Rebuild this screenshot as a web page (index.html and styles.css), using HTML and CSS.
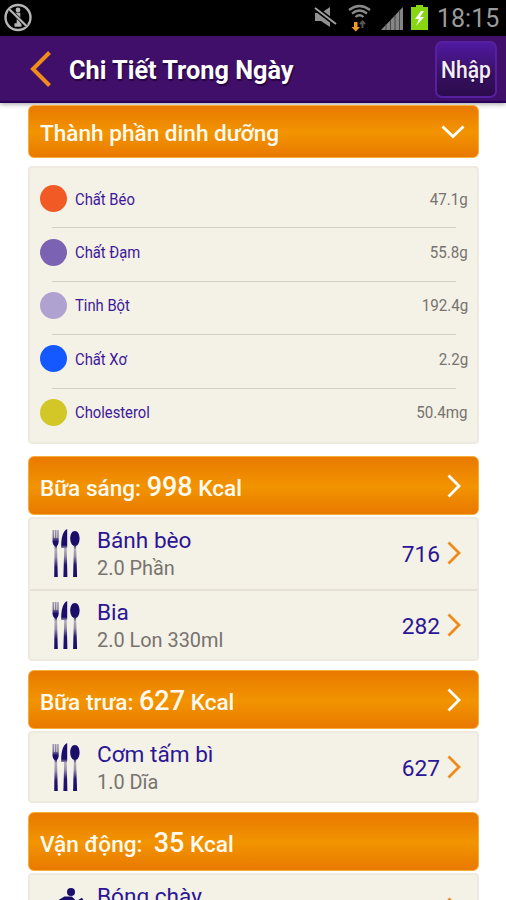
FILE: index.html
```html
<!DOCTYPE html>
<html lang="vi">
<head>
  <meta charset="UTF-8" />
  <meta name="viewport" content="width=device-width, initial-scale=1.0"/>
  <title>Chi Tiết Trong Ngày</title>
  <link rel="stylesheet" href="styles.css">
</head>
<body>

  <!-- Shared shapes -->
  <svg class="defs" width="0" height="0">
    <defs>
      <linearGradient id="steel" x1="0" y1="0" x2="0" y2="50" gradientUnits="userSpaceOnUse">
        <stop offset="0" stop-color="#1a0d6c"/>
        <stop offset="0.34" stop-color="#1a0d6c"/>
        <stop offset="0.42" stop-color="#b3adbf"/>
        <stop offset="0.56" stop-color="#958dab"/>
        <stop offset="0.74" stop-color="#21126d"/>
        <stop offset="1" stop-color="#1a0d6c"/>
      </linearGradient>
      <linearGradient id="fork" x1="0" y1="0" x2="0" y2="50" gradientUnits="userSpaceOnUse">
        <stop offset="0" stop-color="#aaa5b9"/>
        <stop offset="0.18" stop-color="#817898"/>
        <stop offset="0.27" stop-color="#1a0d6c"/>
        <stop offset="0.35" stop-color="#1a0d6c"/>
        <stop offset="0.42" stop-color="#b3adbf"/>
        <stop offset="0.58" stop-color="#958dab"/>
        <stop offset="0.78" stop-color="#21126d"/>
        <stop offset="1" stop-color="#1a0d6c"/>
      </linearGradient>
      <symbol id="cutlery" viewBox="0 0 28 50">
        <path fill="url(#fork)" d="M.5 2h1.500v8h.7V2h1.800v8h.7V2h1.500v11c0 2.500-.8 4-1.700 5l.8 31H2.200L2.600 18C1.300 17 .5 15.500.5 13z"/>
        <path fill="url(#steel)" d="M15.200 1v18l-.5 1 .7 29h-4l.8-29H9.200C9 12 10.200 3 15.200 1z"/>
        <path fill="url(#steel)" d="M22.900 3c3 0 4.700 3.500 4.700 7.500 0 3.700-1.300 6.500-3.500 7.500l1 31h-4l.8-31c-2.300-1-3.700-3.800-3.700-7.500 0-4 1.700-7.500 4.700-7.500z"/>
      </symbol>
      <symbol id="chevron" viewBox="0 0 14 24">
        <path d="M1.500 1.500L12 12 1.500 22.500" fill="none" stroke="currentColor" stroke-width="2.800"/>
      </symbol>
    </defs>
  </svg>

  <div class="screen">
    <div class="status-bar">
      <svg class="status-left" width="30" height="30" viewBox="0 0 30 30" fill="none" stroke="#b5b5b5">
        <circle cx="15" cy="14.500" r="12.500" stroke-width="2.400"/>
        <circle cx="15" cy="7" r="2.400" fill="#b5b5b5" stroke="none"/>
        <path d="M11.500 11.500h4v10M11.500 22h7" stroke-width="3.600"/>
        <path d="M6.500 6.500L23.500 23" stroke="#000" stroke-width="3.600"/>
        <path d="M6 6L24 23.500" stroke-width="2.300"/>
      </svg>
      <svg class="status-icons" width="118" height="36" viewBox="0 0 118 36">
        <!-- muted speaker -->
        <path d="M1 13h6l9-6v20l-9-6H1z" fill="#919191"/>
        <path d="M1 8l21 16" stroke="#000" stroke-width="5"/>
        <path d="M1 8l21 16" stroke="#a2a2a2" stroke-width="2"/>
        <!-- wifi -->
        <g fill="none" stroke="#898989" stroke-width="2.300">
          <path d="M35 10q10.500-8 21 0M38 13.500q7.500-6 15 0M41.500 17q4-3.500 8 0"/>
          <path d="M48.500 28v-6M46 24l2.500-2.500L51 24" stroke="#555" stroke-width="2"/>
        </g>
        <path d="M40 22h3.500v5H46l-4.200 4.500L37.500 27H40z" fill="#f39a24"/>
        <!-- signal -->
        <path d="M67 30h22V7z" fill="#858585"/>
        <path d="M72 24v6M76.500 20v10M81 15v15M85.500 10v20" stroke="#444" stroke-width="1"/>
        <!-- battery -->
        <path d="M97 7h5V5h7v2h5v23H97z" fill="#86d611"/>
        <path d="M107 11l-6 8h4l-3 7 8-9h-4l4-6z" fill="#fff"/>
      </svg>
      <span class="clock">18:15</span>
    </div>

    <div class="header">
      <svg class="back" width="22" height="36" viewBox="0 0 22 36">
        <path d="M19.500 1.500L3 18l16.500 16.500" fill="none" stroke="#f08c1a" stroke-width="4"/>
      </svg>
      <h1>Chi Tiết Trong Ngày</h1>
      <button type="button"><span>Nhập</span></button>
    </div>

    <div class="content">
      <div class="bar bar-nutrition">
        <span class="bar-title">Thành phần dinh dưỡng</span>
        <svg class="down" width="24" height="14" viewBox="0 0 24 14">
          <path d="M1.500 1.500L12 11.500 22.500 1.500" fill="none" stroke="#fff" stroke-width="2.800"/>
        </svg>
      </div>

      <div class="nutrition">
        <div class="nutrient"><i class="dot fat"></i><span class="name">Chất Béo</span><span class="amount">47.1g</span></div>
        <div class="nutrient"><i class="dot protein"></i><span class="name">Chất Đạm</span><span class="amount">55.8g</span></div>
        <div class="nutrient"><i class="dot starch"></i><span class="name">Tinh Bột</span><span class="amount">192.4g</span></div>
        <div class="nutrient"><i class="dot fiber"></i><span class="name">Chất Xơ</span><span class="amount">2.2g</span></div>
        <div class="nutrient"><i class="dot cholesterol"></i><span class="name">Cholesterol</span><span class="amount">50.4mg</span></div>
      </div>

      <div class="bar">
        <span class="bar-title">Bữa sáng: <b>998</b> Kcal</span>
        <svg class="arrow"><use href="#chevron"/></svg>
      </div>
      <div class="list">
        <div class="item">
          <svg class="food"><use href="#cutlery"/></svg>
          <div class="info"><p class="dish">Bánh bèo</p><p class="portion">2.0 Phần</p></div>
          <span class="kcal">716</span>
          <svg class="arrow"><use href="#chevron"/></svg>
        </div>
        <div class="item">
          <svg class="food"><use href="#cutlery"/></svg>
          <div class="info"><p class="dish">Bia</p><p class="portion">2.0 Lon 330ml</p></div>
          <span class="kcal">282</span>
          <svg class="arrow"><use href="#chevron"/></svg>
        </div>
      </div>

      <div class="bar">
        <span class="bar-title">Bữa trưa: <b>627</b> Kcal</span>
        <svg class="arrow"><use href="#chevron"/></svg>
      </div>
      <div class="list">
        <div class="item">
          <svg class="food"><use href="#cutlery"/></svg>
          <div class="info"><p class="dish">Cơm tấm bì</p><p class="portion">1.0 Dĩa</p></div>
          <span class="kcal">627</span>
          <svg class="arrow"><use href="#chevron"/></svg>
        </div>
      </div>

      <div class="bar">
        <span class="bar-title">Vận động:&nbsp; <b>35</b> Kcal</span>
      </div>
      <div class="list">
        <div class="item">
          <svg class="sport" viewBox="0 0 36 50">
            <circle cx="19" cy="6" r="4" fill="#1a0d6c"/>
            <path d="M8 15.500l5-3h6l5 5 7-4M17 13l-4 14 9 6-2 12M13 27l-8 11" fill="none" stroke="#1a0d6c" stroke-width="4"/>
          </svg>
          <div class="info"><p class="dish">Bóng chày</p></div>
          <svg class="arrow"><use href="#chevron"/></svg>
        </div>
      </div>
    </div>
  </div>

</body>
</html>
```
FILE: styles.css
```css
body {
  font-family: Roboto, "Noto Sans", sans-serif;
  background: #fff;
  margin: 0;
}

.defs {
  position: absolute;
}

.screen {
  height: 900px;
  overflow: hidden;
}

.status-bar {
  display: flex;
  align-items: center;
  box-sizing: border-box;
  height: 36px;
  padding: 0 7px 0 3px;
  background: #000;
}

.status-icons {
  margin-left: auto;
  margin-right: 5px;
}

.clock {
  width: 62px;
  color: #9b9b9b;
  font-size: 25px;
  white-space: nowrap;
}

.header {
  display: flex;
  align-items: center;
  box-sizing: border-box;
  height: 67px;
  padding: 0 9px 0 30px;
  background: #400f69;
  border-bottom: 2px solid #28005a;
  box-shadow: 0 1px 5px rgba(0, 0, 0, 0.4);
}

h1 {
  margin: 5px auto 0 17px;
  color: #fff;
  font-size: 25.3px;
  line-height: 30px;
  font-weight: bold;
  white-space: nowrap;
  text-shadow: 1px 2px 1px #25033f;
}

button {
  width: 62px;
  height: 57px;
  margin-top: 2px;
  padding: 0;
  border: 2px solid #5720a0;
  border-radius: 7px;
  background: linear-gradient(#5019a0, #35105d 65%, #2c0b4d);
  color: #f2edf5;
  font-family: inherit;
  font-size: 24px;
  font-weight: 500;
  white-space: nowrap;
  text-shadow: 1px 1px 1px #260044;
}

button span {
  display: block;
  margin: 0 -5px;
  transform: scaleX(0.88);
}

.content {
  padding: 2px 27px 0 28px;
}

.bar {
  display: flex;
  align-items: center;
  justify-content: space-between;
  box-sizing: border-box;
  height: 59px;
  padding: 3px 17px 0 11px;
  border: 1px solid #f4ae3a;
  border-radius: 6px;
  background: linear-gradient(#e97900, #f29400 52%, #e97900);
  color: #fffaf0;
}

.bar .arrow {
  margin-top: -2px;
}

.bar-nutrition {
  height: 53px;
  padding-right: 13px;
}

.down {
  margin-top: -3px;
}

.bar-title {
  font-size: 22.6px;
  font-weight: 500;
  white-space: nowrap;
}

.bar-title b {
  font-size: 27px;
  font-weight: 500;
}

.nutrition {
  box-sizing: border-box;
  height: 278px;
  margin: 8px 0 12px;
  padding: 4px 9px 0 10px;
  border: 2px solid #eeeadf;
  border-radius: 4px;
  background: #f4f1e6;
}

.nutrient {
  display: flex;
  align-items: center;
  box-sizing: border-box;
  height: 53.4px;
}

/* separator sits slightly below the row's middle gap */
.nutrient + .nutrient {
  background: linear-gradient(#d2cfc7, #d2cfc7) 12px 2px / 404px 1px no-repeat;
}

.dot {
  width: 27px;
  height: 27px;
  margin-right: 8px;
  border-radius: 50%;
}

.fat { background: #f15a24; }
.protein { background: #7b62b3; }
.starch { background: #afa2d0; }
.fiber { background: #1459ff; }
.cholesterol { background: #d3c727; }

.name {
  margin-right: auto;
  color: #3c189a;
  font-size: 17px;
  transform: scaleX(0.87);
  transform-origin: left;
}

.amount {
  color: #77736f;
  font-size: 17px;
  transform: scaleX(0.89);
  transform-origin: right;
}

.list {
  margin: 2px 0 9px;
  border: 2px solid #eeeadf;
  border-radius: 4px;
  background: #f4f1e6;
}

.item {
  display: flex;
  align-items: center;
  box-sizing: border-box;
  height: 68px;
  padding: 0 16px 0 22px;
}

/* lists with several rows share 140px */
.item:not(:last-child) {
  height: 70px;
  padding-bottom: 2px;
}

.item + .item {
  height: 70px;
  border-top: 2px solid #e5e1d7;
}

.food {
  width: 28px;
  height: 50px;
}

.sport {
  width: 36px;
  height: 50px;
  margin: 4px -8px 0 0;
}

.info {
  flex: 1;
  height: 56px;
  margin: 4px 0 0 17px;
}

.info p {
  margin: 0;
  white-space: nowrap;
}

.dish {
  color: #2b1596;
  font-size: 22.6px;
  line-height: 28px;
}

.portion {
  color: #77736f;
  font-size: 19.9px;
  line-height: 28px;
}

.kcal {
  margin: 2px 7px 0 0;
  color: #2b1596;
  font-size: 22.7px;
}

.arrow {
  width: 14px;
  height: 24px;
  color: #fff;
}

.item .arrow {
  color: #ed8c1c;
}
```
